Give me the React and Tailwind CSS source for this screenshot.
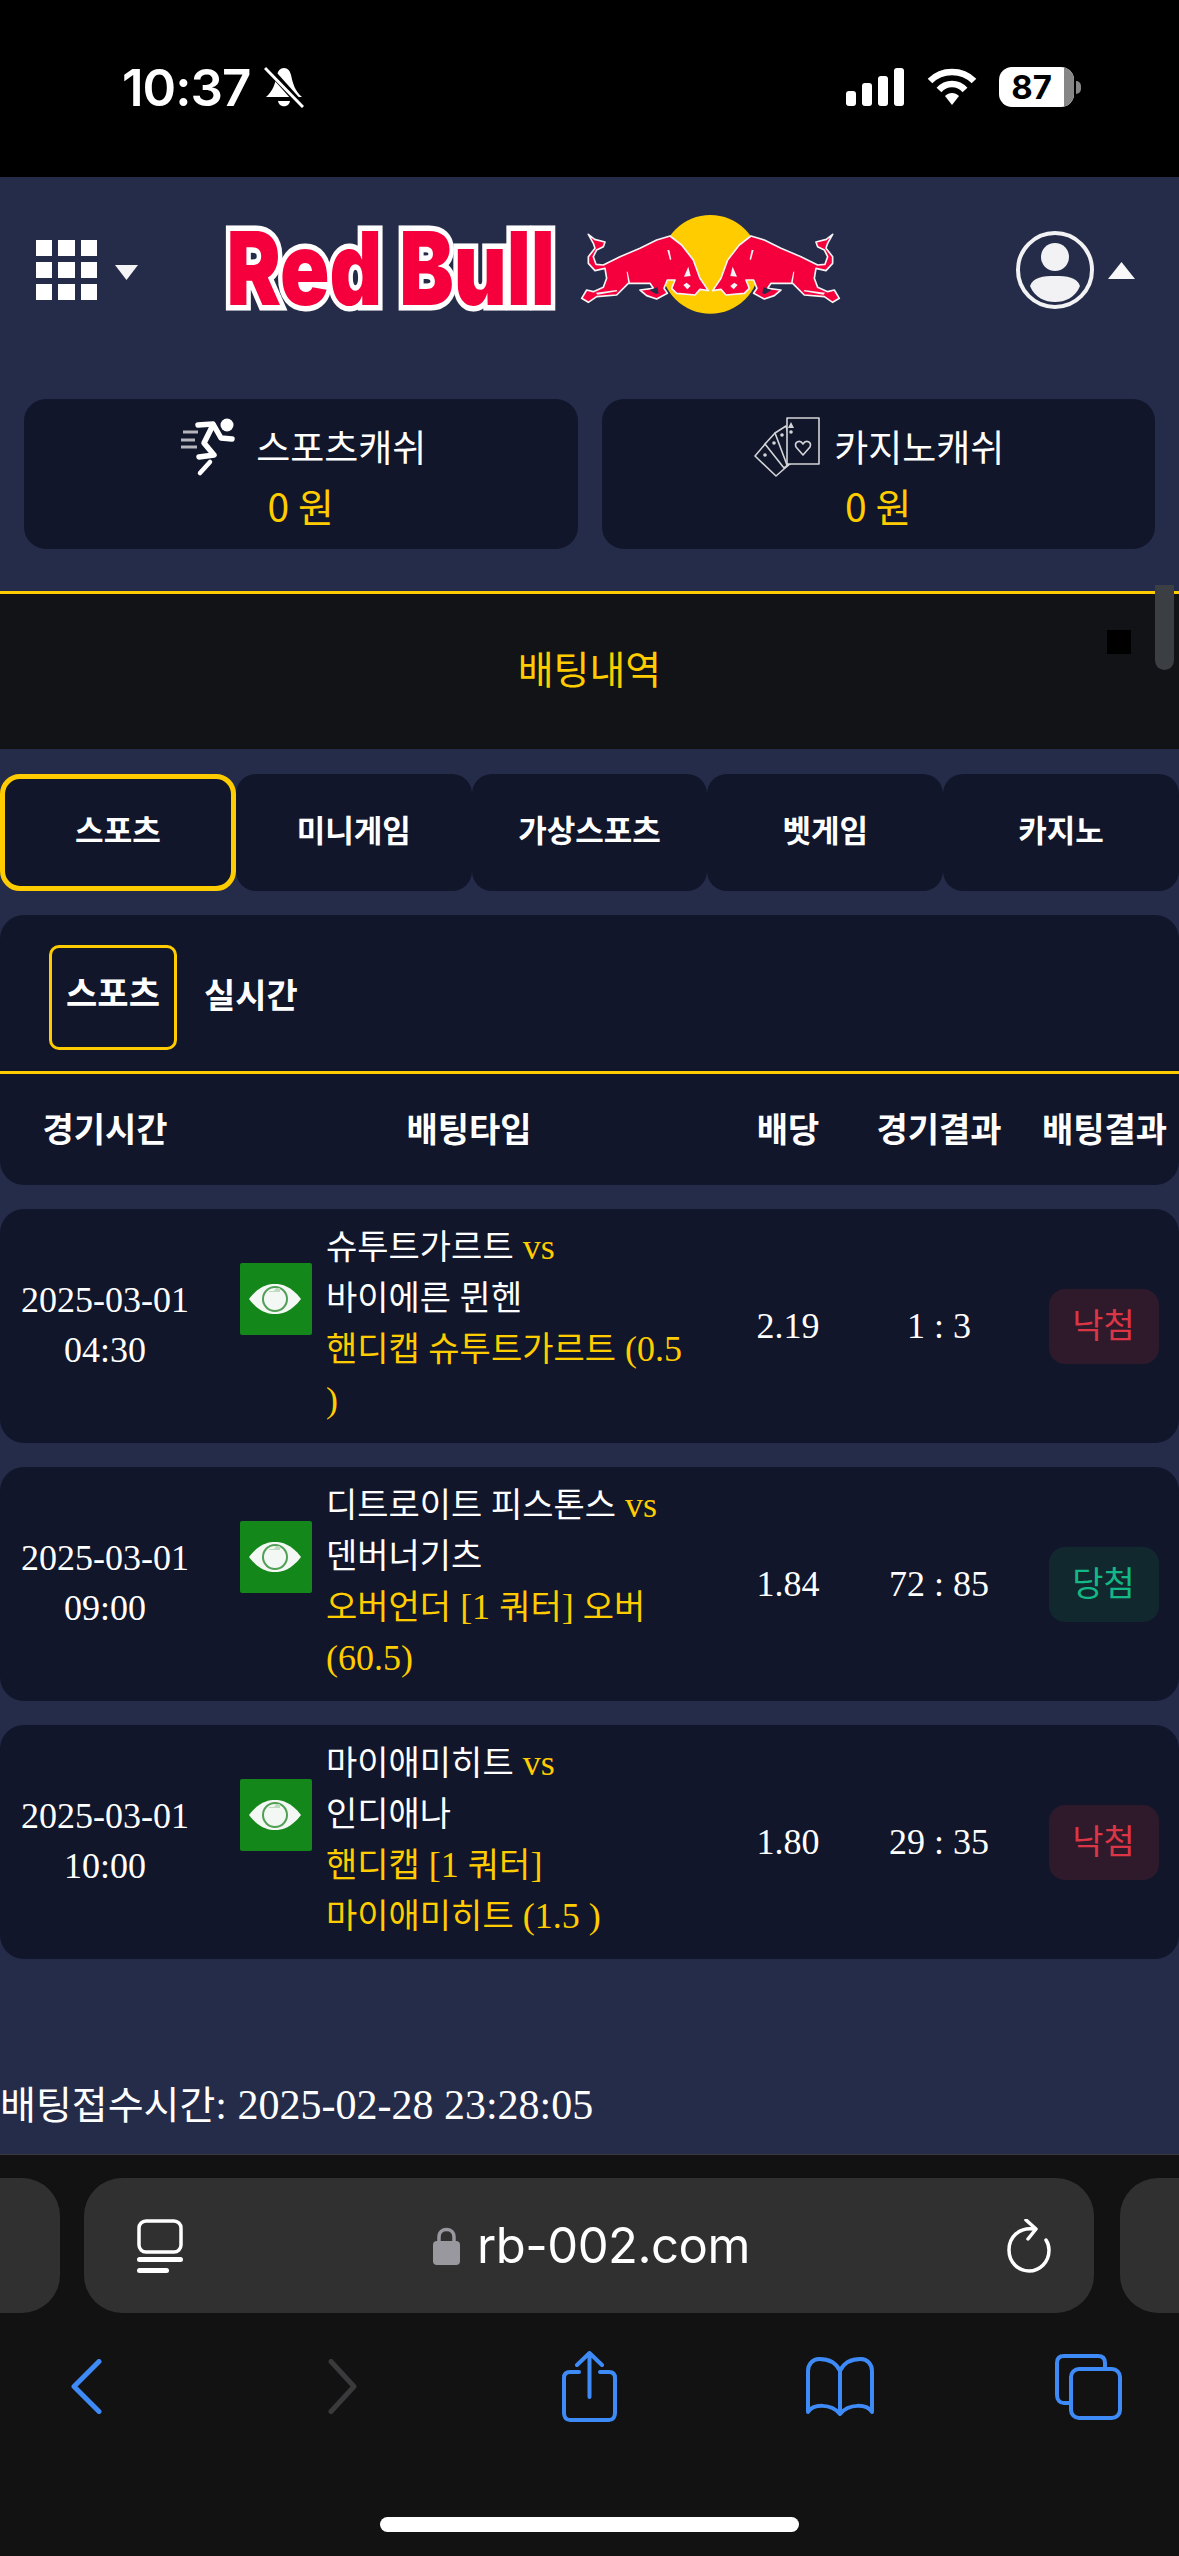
import React from "react";

const Bull = () => (
  <path
    d="M85 103 L104 118 L135 126 L130 140 L110 150 L100 170 L108 193 L130 195 L180 170 L240 145 L290 120 L330 108 L365 135 L400 180 L420 235 L445 272 L420 268 L405 285 L350 280 L335 265 L345 240 L322 240 L312 265 L322 280 L290 297 L260 287 L240 270 L280 265 L270 250 L205 250 L170 285 L110 290 L85 307 L65 295 L80 270 L100 275 L130 262 L140 235 L135 205 L105 212 L85 190 L85 170 L105 145 L100 130 Z"
    fill="#f5003c"
    stroke="#f4f4f6"
    strokeWidth="5"
    strokeLinejoin="round"
  />
);

const BullDetail = () => (
  <g fill="#f4f4f6">
    <path d="M322 150 L330 180 L334 178 L328 150 Z" />
    <path d="M385 200 L372 230 L392 228 Z" />
    <path d="M370 255 L382 268 L392 258 L380 248 Z" />
    <path d="M205 250 L200 215 L203 215 L210 248 Z" />
    <path d="M108 278 L170 270 L172 274 L112 284 Z" />
    <path d="M268 270 L292 262 L296 280 L288 282 Z" fill="#252c49" />
  </g>
);

const Logo = () => (
  <svg viewBox="220 210 625 110" className="w-[625px] h-[110px] shrink-0">
    <g
      transform="scale(0.8 1)"
      fontFamily="Inter, 'Liberation Sans', sans-serif"
      fontWeight="900"
      fontSize="102"
      fill="#f5003c"
      stroke="#ffffff"
      strokeWidth="11"
      strokeLinejoin="miter"
      style={{ paintOrder: "stroke" }}
    >
      <text x="283" y="305">Red</text>
      <text x="499" y="305">Bull</text>
    </g>
    <g transform="translate(560 200) scale(0.3333)">
      <circle cx="451" cy="193" r="148" fill="#ffcc00" />
      <Bull />
      <BullDetail />
      <g transform="translate(903 0) scale(-1 1)">
        <Bull />
        <BullDetail />
      </g>
    </g>
  </svg>
);

const Runner = () => (
  <svg viewBox="0 0 60 60" className="w-[60px] h-[60px] shrink-0">
    <circle cx="48" cy="8" r="6.5" fill="#fff" />
    <g stroke="#fff" fill="none" strokeWidth="5.5" strokeLinejoin="round" strokeLinecap="round">
      <path d="M19 8 L34 7 L42 21 L53 22" />
      <path d="M34 8 L25 26 L35 38 L20 40" />
    </g>
    <path d="M31 45 L21 56" stroke="#fff" strokeWidth="4.5" strokeLinecap="round" />
    <g stroke="#b5b5bb" strokeWidth="3" fill="none">
      <path d="M4 15 H19" />
      <path d="M2 23 H16" />
      <path d="M2 30 H18" />
    </g>
  </svg>
);

const CardFan = () => (
  <svg viewBox="0 0 66 60" className="w-[66px] h-[60px] shrink-0">
    <g fill="#11162b" stroke="#d4d4d8" strokeWidth="1.6" strokeLinejoin="round">
      <path d="M1 39 L12 26 L38 45 L22 59 Z" />
      <path d="M11 27 L21 16 L42 42 L30 51 Z" />
      <path d="M21 16 L32 9 L42 44 L33 48 Z" />
      <path d="M33 1 H65 V47 H33 Z" />
      <path d="M49 27 C46 22 40 25 42 30 L49 38 L56 30 C58 25 52 22 49 27 Z" fill="none" />
    </g>
    <g fill="#d4d4d8">
      <path d="M37 5 L40 11 H34 Z" />
      <circle cx="37" cy="15" r="1.8" />
      <circle cx="28" cy="18" r="1.8" />
      <circle cx="20" cy="26" r="1.8" />
      <circle cx="11" cy="38" r="1.8" />
    </g>
  </svg>
);

const Eye = () => (
  <div className="w-[72px] h-[72px] shrink-0 bg-[#13871a] rounded-[2px] mt-[36px] flex items-center justify-center">
    <svg viewBox="0 0 52 32" className="w-[52px] h-[32px] -translate-x-[1px]">
      <path d="M0 16 C10 3 19 1 26 1 C33 1 42 3 52 16 C42 29 33 31 26 31 C19 31 10 29 0 16 Z" fill="#f4f8f4" />
      <circle cx="26" cy="16" r="13" fill="#4f9f54" />
      <circle cx="26" cy="16" r="11" fill="#f4f8f4" />
      <path d="M20 8 H25 L27 5 H31 V9 L20 9 Z" fill="#bcdcbd" />
    </svg>
  </div>
);

const K = ({ children }) => <span className="text-[34px]">{children}</span>;

const Y = ({ children }) => <span className="text-[#ffcc00]">{children}</span>;

const rows = [
  {
    date: "04:30",
    lines: [
      <><K>슈투트가르트</K> <Y>vs</Y></>,
      <K>바이에른 뮌헨</K>,
      <Y><K>핸디캡 슈투트가르트</K> (0.5</Y>,
      <Y>)</Y>,
    ],
    odds: "2.19",
    score: "1 : 3",
    win: false,
  },
  {
    date: "09:00",
    lines: [
      <><K>디트로이트 피스톤스</K> <Y>vs</Y></>,
      <K>덴버너기츠</K>,
      <Y><K>오버언더</K> [1 <K>쿼터</K>] <K>오버</K></Y>,
      <Y>(60.5)</Y>,
    ],
    odds: "1.84",
    score: "72 : 85",
    win: true,
  },
  {
    date: "10:00",
    lines: [
      <><K>마이애미히트</K> <Y>vs</Y></>,
      <K>인디애나</K>,
      <Y><K>핸디캡</K> [1 <K>쿼터</K>]</Y>,
      <Y><K>마이애미히트</K> (1.5 )</Y>,
    ],
    odds: "1.80",
    score: "29 : 35",
    win: false,
  },
];

const COLS = "grid grid-cols-[210px_518px_120px_182px_149px]";

export default function App() {
  return (
    <div className="w-[1179px] h-[2556px] overflow-hidden flex flex-col bg-[#252c49] text-white font-['Liberation_Serif','Noto_Sans_CJK_KR',serif] text-[36px]">
      {/* status bar */}
      <div className="h-[177px] shrink-0 bg-black font-['Inter',sans-serif]">
        <div className="flex items-center h-[38px] mt-[68px] pl-[122px] pr-[98px]">
          <span className="text-[51px] font-semibold leading-none tracking-[-1px]">10:37</span>
          <svg viewBox="0 0 40 42" className="w-[40px] h-[42px] ml-[14px]">
            <path d="M20 2 C24 2 26 5 27 9 C29 18 31 25 38 31 H2 C9 25 11 18 13 9 C14 5 16 2 20 2 Z" fill="#fff" />
            <path d="M14 35 H26 C25 42 15 42 14 35 Z" fill="#fff" />
            <path d="M3 1 L38 40" stroke="#000" strokeWidth="7" />
            <path d="M1 2 L39 41" stroke="#fff" strokeWidth="3" />
          </svg>
          <div className="flex-1" />
          <svg viewBox="0 0 58 38" className="w-[58px] h-[38px]">
            <g fill="#fff">
              <rect x="0" y="23" width="10" height="15" rx="3" />
              <rect x="16" y="15" width="10" height="23" rx="3" />
              <rect x="32" y="8" width="10" height="30" rx="3" />
              <rect x="48" y="0" width="10" height="38" rx="3" />
            </g>
          </svg>
          <svg viewBox="0 0 50 38" className="w-[50px] h-[38px] ml-[23px]">
            <g fill="none" stroke="#fff" strokeWidth="6.5">
              <path d="M3 13 C15 1 35 1 47 13" />
              <path d="M12 22 C19 14 31 14 38 22" />
            </g>
            <path d="M18 28 C22 24 28 24 32 28 L25 37 Z" fill="#fff" />
          </svg>
          <div className="ml-[22px] w-[75px] h-[40px] rounded-[13px] overflow-hidden flex bg-white">
            <div className="flex-1 flex items-center justify-center text-black text-[33px] font-bold leading-none">87</div>
            <div className="w-[10px] bg-[#868686]" />
          </div>
          <div className="ml-[2px] w-[5px] h-[13px] rounded-r-full bg-[#868686]" />
        </div>
      </div>

      <div className="flex-1 min-h-0 relative overflow-hidden">
        {/* scrollbar and stray square */}
        <div className="absolute left-[1155px] top-[408px] w-[19px] h-[85px] rounded-b-full bg-[#3b3e43]" />
        <div className="absolute left-[1107px] top-[453px] w-[24px] h-[24px] bg-black" />

        {/* top nav */}
        <div className="flex items-center h-[176px]">
          <div className="w-[220px] pl-[36px] flex items-center shrink-0 mt-[10px]">
            <svg viewBox="0 0 61 60" className="w-[61px] h-[60px]">
              <g fill="#fff">
                <rect x="0" y="0" width="16" height="16" /><rect x="22" y="0" width="17" height="16" /><rect x="45" y="0" width="16" height="16" />
                <rect x="0" y="22" width="16" height="16" /><rect x="22" y="22" width="17" height="16" /><rect x="45" y="22" width="16" height="16" />
                <rect x="0" y="44" width="16" height="16" /><rect x="22" y="44" width="17" height="16" /><rect x="45" y="44" width="16" height="16" />
              </g>
            </svg>
            <svg viewBox="0 0 23 15" className="w-[23px] h-[15px] ml-[18px] mt-[4px]"><path d="M0 0 H23 L11.5 15 Z" fill="#f4f4f6" /></svg>
          </div>
          <Logo />
          <div className="flex items-center pl-[170px] mt-[10px]">
            <svg viewBox="0 0 80 80" className="w-[80px] h-[80px]">
              <circle cx="40" cy="40" r="37" fill="none" stroke="#f2f2f4" strokeWidth="4" />
              <circle cx="40" cy="27" r="14" fill="#f2f2f4" />
              <path d="M15 56 C18 47 28 46 40 46 C52 46 62 47 65 56 C60 68 50 72 40 72 C30 72 20 68 15 56 Z" fill="#f2f2f4" />
            </svg>
            <svg viewBox="0 0 27 17" className="w-[27px] h-[17px] ml-[13px]"><path d="M13.5 0 L27 17 H0 Z" fill="#f8f8f8" /></svg>
          </div>
        </div>

        {/* wallet cards */}
        <div className="grid grid-cols-2 gap-[24px] px-[24px] mt-[46px] font-['Noto_Sans_CJK_KR',sans-serif]">
          <div className="h-[150px] rounded-[22px] bg-[#11162b] flex flex-col items-center pt-[18px]">
            <div className="flex items-center h-[60px] gap-[17px] pl-[4px]">
              <Runner />
              <span className="text-[37px] leading-none -mt-[2px]">스포츠캐쉬</span>
            </div>
            <div className="mt-[8px] text-[39px] leading-[40px] text-[#ffcc00]">0 원</div>
          </div>
          <div className="h-[150px] rounded-[22px] bg-[#11162b] flex flex-col items-center pt-[18px]">
            <div className="flex items-center h-[60px] gap-[14px] pl-[2px]">
              <CardFan />
              <span className="text-[37px] leading-none -mt-[2px]">카지노캐쉬</span>
            </div>
            <div className="mt-[8px] text-[39px] leading-[40px] text-[#ffcc00]">0 원</div>
          </div>
        </div>

        {/* title */}
        <div className="mt-[42px] h-[158px] border-t-[3px] border-[#ffcc00] bg-[#111317] pb-[8px] flex items-center justify-center font-['Noto_Sans_CJK_KR',sans-serif] text-[39px] text-[#ffcc00]">
          배팅내역
        </div>

        {/* category tabs */}
        <div className="mt-[25px] grid grid-cols-5 font-['Noto_Sans_CJK_KR',sans-serif] font-bold text-[31px] leading-[48px]">
          {["스포츠", "미니게임", "가상스포츠", "벳게임", "카지노"].map((t, i) => (
            <div
              key={t}
              className={
                i === 0
                  ? "h-[117px] rounded-[20px] bg-[#11162b] border-[5px] border-[#ffcc00] pt-[26px] text-center"
                  : "h-[117px] rounded-[20px] bg-[#11162b] border-[5px] border-transparent pt-[26px] text-center"
              }
            >
              {t}
            </div>
          ))}
        </div>

        {/* subtabs + table head */}
        <div className="mt-[24px] rounded-[24px] bg-[#11162b] font-['Noto_Sans_CJK_KR',sans-serif] font-bold">
          <div className="flex items-start pl-[49px] pt-[30px] pb-[21px] border-b-[3px] border-[#ffcc00]">
            <div className="w-[128px] h-[105px] rounded-[10px] border-[3px] border-[#ffcc00] text-[34px] leading-[40px] pt-[24px] text-center">스포츠</div>
            <div className="ml-[27px] mt-[29px] text-[34px] leading-[40px]">실시간</div>
          </div>
          <div className={`${COLS} h-[111px] pb-[5px] items-center text-center text-[34px]`}>
            <div>경기시간</div>
            <div>배팅타입</div>
            <div>배당</div>
            <div>경기결과</div>
            <div>배팅결과</div>
          </div>
        </div>

        {/* bet rows */}
        <div className="mt-[24px] flex flex-col gap-[24px]">
          {rows.map((r) => (
            <div key={r.date} className={`${COLS} h-[234px] rounded-[24px] bg-[#11162b] items-center text-center`}>
              <div className="leading-[50px] -mt-[3px]">
                2025-03-01
                <br />
                {r.date}
              </div>
              <div className="flex items-start pl-[30px] gap-[14px] text-left leading-[51px]">
                <Eye />
                <div className="-mt-[5px] whitespace-nowrap">
                  {r.lines.map((l, i) => (
                    <div key={i} className="h-[51px]">{l}</div>
                  ))}
                </div>
              </div>
              <div className="-mt-[1px]">{r.odds}</div>
              <div className="-mt-[1px]">{r.score}</div>
              <div className="flex justify-center -ml-[2px]">
                <div
                  className={
                    r.win
                      ? "w-[110px] h-[75px] pb-[6px] rounded-[16px] bg-[#12282f] text-[#12b886] flex items-center justify-center text-[34px] font-['Noto_Sans_CJK_KR',sans-serif]"
                      : "w-[110px] h-[75px] pb-[6px] rounded-[16px] bg-[#2e1a2a] text-[#dc3545] flex items-center justify-center text-[34px] font-['Noto_Sans_CJK_KR',sans-serif]"
                  }
                >
                  {r.win ? "당첨" : "낙첨"}
                </div>
              </div>
            </div>
          ))}
        </div>

        {/* footer line */}
        <div className="mt-[121px] text-[42px] leading-[50px] whitespace-nowrap">
          <span className="text-[39px]">배팅접수시간</span>: 2025-02-28 23:28:05
        </div>
      </div>

      {/* safari toolbar */}
      <div className="h-[402px] shrink-0 bg-[#121212] border-t border-[#3a3a3c] font-['Inter',sans-serif]">
        <div className="flex mt-[23px] h-[135px]">
          <div className="w-[60px] rounded-r-[38px] bg-[#303030]" />
          <div className="ml-[24px] w-[1010px] rounded-[38px] bg-[#303030] flex items-center relative">
            <svg viewBox="0 0 46 54" className="w-[46px] h-[54px] ml-[53px]">
              <rect x="2" y="2" width="42" height="31" rx="7" fill="none" stroke="#fff" strokeWidth="3.5" />
              <rect x="0" y="38" width="46" height="5" rx="2.5" fill="#fff" />
              <rect x="0" y="49" width="32" height="5" rx="2.5" fill="#fff" />
            </svg>
            <svg viewBox="0 0 27 38" className="w-[27px] h-[38px] ml-[250px]">
              <rect x="0" y="14" width="27" height="24" rx="4" fill="#98989e" />
              <path d="M6 15 V10 C6 0 21 0 21 10 V15" fill="none" stroke="#98989e" strokeWidth="3.5" />
            </svg>
            <span className="ml-[17px] text-[49px] leading-none tracking-[-0.5px]">rb-002.com</span>
            <svg viewBox="0 0 44 54" className="w-[44px] h-[54px] ml-[257px]">
              <path d="M27 10 C12 8 2 18 2 31 C2 43 11 52 22 52 C33 52 42 43 42 31 C42 27 41 24 39 21" fill="none" stroke="#fff" strokeWidth="3.5" strokeLinecap="round" />
              <path d="M19 1 L29 10 L21 20" fill="none" stroke="#fff" strokeWidth="3.5" strokeLinecap="round" strokeLinejoin="round" />
            </svg>
          </div>
          <div className="ml-[26px] flex-1 rounded-l-[38px] bg-[#303030]" />
        </div>

        <div className="flex items-center h-[71px] mt-[38px]">
          <svg viewBox="0 0 31 55" className="w-[31px] h-[55px] ml-[71px]">
            <path d="M28 2.5 L3 27.5 L28 52.5" fill="none" stroke="#3e8bf7" strokeWidth="5" strokeLinecap="round" strokeLinejoin="round" />
          </svg>
          <svg viewBox="0 0 29 55" className="w-[29px] h-[55px] ml-[226px]">
            <path d="M3 2.5 L26 27.5 L3 52.5" fill="none" stroke="#3a3a3c" strokeWidth="5" strokeLinecap="round" strokeLinejoin="round" />
          </svg>
          <svg viewBox="0 0 55 71" className="w-[55px] h-[71px] ml-[205px]">
            <path d="M17 21 H8 C4 21 2 23 2 27 V62 C2 66 4 69 8 69 H47 C51 69 53 66 53 62 V27 C53 23 51 21 47 21 H38" fill="none" stroke="#3e8bf7" strokeWidth="4" strokeLinecap="round" />
            <path d="M27.5 46 V3 M15 14 L27.5 2 L40 14" fill="none" stroke="#3e8bf7" strokeWidth="4" strokeLinecap="round" strokeLinejoin="round" />
          </svg>
          <svg viewBox="0 0 70 59" className="w-[70px] h-[59px] ml-[188px]">
            <path d="M35 14 C31 5 23 2 14 2 C8 2 3 7 3 14 V55 C8 47 26 46 35 57 C44 46 62 47 67 55 V14 C67 7 62 2 56 2 C47 2 39 5 35 14 Z M35 14 V57" fill="none" stroke="#3e8bf7" strokeWidth="4" strokeLinejoin="round" />
          </svg>
          <svg viewBox="0 0 67 66" className="w-[67px] h-[66px] ml-[180px]">
            <path d="M50 14 V9 C50 4 47 2 43 2 H9 C5 2 2 4 2 9 V41 C2 46 5 49 9 49 H15" fill="none" stroke="#3e8bf7" strokeWidth="4" />
            <rect x="16" y="15" width="49" height="49" rx="8" fill="none" stroke="#3e8bf7" strokeWidth="4" />
          </svg>
        </div>

        <div className="flex justify-center mt-[95px]">
          <div className="w-[419px] h-[15px] rounded-full bg-white" />
        </div>
      </div>
    </div>
  );
}
